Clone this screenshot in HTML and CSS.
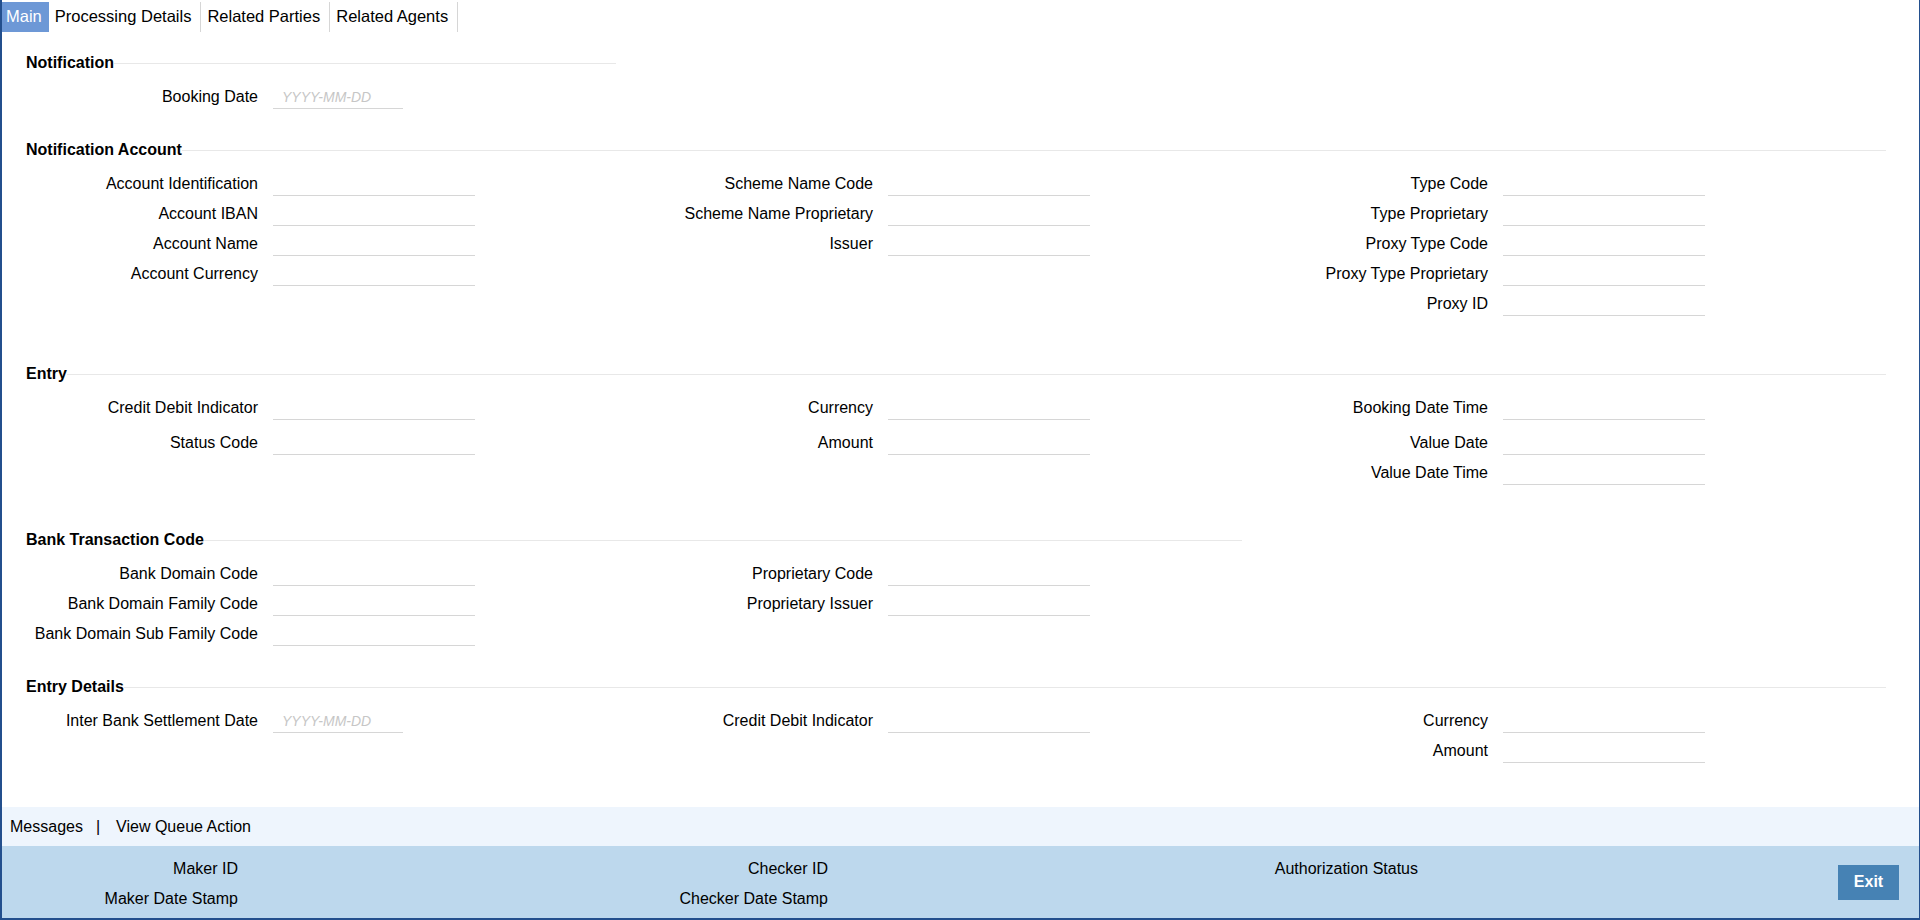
FILE: index.html
```html
<!DOCTYPE html>
<html lang="en">
<head>
    <meta charset="UTF-8">
    <title>Notification Detail</title>
    <link rel="stylesheet" href="styles.css">
</head>
<body>
<div class="frame">
    <ul class="tabs">
        <li class="tab tab-on">Main</li>
        <li class="tab">Processing Details</li>
        <li class="tab">Related Parties</li>
        <li class="tab">Related Agents</li>
    </ul>

    <div class="form">
        <!-- Notification -->
        <div class="sec sec-notif">
            <div class="legend w-one"><span>Notification</span></div>
            <div class="cols">
                <div class="col">
                    <div class="row"><label>Booking Date</label><input class="date" type="text" placeholder="YYYY-MM-DD"></div>
                </div>
            </div>
        </div>

        <!-- Notification Account -->
        <div class="sec sec-acct">
            <div class="legend w-full"><span>Notification Account</span></div>
            <div class="cols">
                <div class="col">
                    <div class="row"><label>Account Identification</label><input type="text"></div>
                    <div class="row"><label>Account IBAN</label><input type="text"></div>
                    <div class="row"><label>Account Name</label><input type="text"></div>
                    <div class="row"><label>Account Currency</label><input type="text"></div>
                </div>
                <div class="col">
                    <div class="row"><label>Scheme Name Code</label><input type="text"></div>
                    <div class="row"><label>Scheme Name Proprietary</label><input type="text"></div>
                    <div class="row"><label>Issuer</label><input type="text"></div>
                </div>
                <div class="col">
                    <div class="row"><label>Type Code</label><input type="text"></div>
                    <div class="row"><label>Type Proprietary</label><input type="text"></div>
                    <div class="row"><label>Proxy Type Code</label><input type="text"></div>
                    <div class="row"><label>Proxy Type Proprietary</label><input type="text"></div>
                    <div class="row"><label>Proxy ID</label><input type="text"></div>
                </div>
            </div>
        </div>

        <!-- Entry -->
        <div class="sec sec-entry">
            <div class="legend w-full"><span>Entry</span></div>
            <div class="cols">
                <div class="col">
                    <div class="row row-tall"><label>Credit Debit Indicator</label><input type="text"></div>
                    <div class="row"><label>Status Code</label><input type="text"></div>
                </div>
                <div class="col">
                    <div class="row row-tall"><label>Currency</label><input type="text"></div>
                    <div class="row"><label>Amount</label><input type="text"></div>
                </div>
                <div class="col">
                    <div class="row row-tall"><label>Booking Date Time</label><input type="text"></div>
                    <div class="row"><label>Value Date</label><input type="text"></div>
                    <div class="row"><label>Value Date Time</label><input type="text"></div>
                </div>
            </div>
        </div>

        <!-- Bank Transaction Code -->
        <div class="sec sec-bank">
            <div class="legend w-two"><span>Bank Transaction Code</span></div>
            <div class="cols">
                <div class="col">
                    <div class="row"><label>Bank Domain Code</label><input type="text"></div>
                    <div class="row"><label>Bank Domain Family Code</label><input type="text"></div>
                    <div class="row"><label>Bank Domain Sub Family Code</label><input type="text"></div>
                </div>
                <div class="col">
                    <div class="row"><label>Proprietary Code</label><input type="text"></div>
                    <div class="row"><label>Proprietary Issuer</label><input type="text"></div>
                </div>
            </div>
        </div>

        <!-- Entry Details -->
        <div class="sec">
            <div class="legend w-full"><span>Entry Details</span></div>
            <div class="cols">
                <div class="col">
                    <div class="row"><label>Inter Bank Settlement Date</label><input class="date" type="text" placeholder="YYYY-MM-DD"></div>
                </div>
                <div class="col">
                    <div class="row"><label>Credit Debit Indicator</label><input type="text"></div>
                </div>
                <div class="col">
                    <div class="row"><label>Currency</label><input type="text"></div>
                    <div class="row"><label>Amount</label><input type="text"></div>
                </div>
            </div>
        </div>
    </div>

    <div class="msgbar">
        <a href="javascript:void(0)">Messages</a><span class="sep">|</span><a href="javascript:void(0)">View Queue Action</a>
    </div>

    <div class="audit">
        <div class="audit-cols">
            <div class="audit-col">
                <div class="audit-row">Maker ID</div>
                <div class="audit-row">Maker Date Stamp</div>
            </div>
            <div class="audit-col">
                <div class="audit-row">Checker ID</div>
                <div class="audit-row">Checker Date Stamp</div>
            </div>
            <div class="audit-col">
                <div class="audit-row">Authorization Status</div>
            </div>
        </div>
        <button class="exit" type="button">Exit</button>
    </div>
</div>
</body>
</html>
```

FILE: styles.css
```css
*{
    padding: 0px;
    margin: 0px;
    box-sizing: border-box;
}
body{
    font-family: "Liberation Sans", Arial, sans-serif;
    font-size: 16px;
    color: #000;
    background: white;
}
.frame{
    width: 1920px;
    height: 920px;
    display: flex;
    flex-direction: column;
    border-left: 2px solid #234f8d;
    border-right: 1px solid #234f8d;
    border-bottom: 2px solid #234f8d;
    overflow: hidden;
}

/* tabs */
.tabs{
    list-style: none;
    display: flex;
    height: 32px;
    padding-top: 2px;
}
.tab{
    line-height: 29px;
    padding: 0 9px 1px 6px;
    font-size: 16.5px;
    border-right: 1px solid #d6d6d6;
    white-space: nowrap;
}
.tab-on{
    background: #6d98d6;
    color: white;
    padding: 0 7px 1px 4px;
    border-right: none;
}

/* form */
.form{
    flex: 1;
    padding: 21px 0 0 10px;
}
.sec{
    margin-bottom: 28px;
}
.sec-acct{
    margin-bottom: 45px;
}
.sec-entry{
    margin-bottom: 42px;
}
.sec-bank{
    margin-bottom: 28px;
}
.legend{
    display: flex;
    align-items: center;
    height: 20px;
    padding-left: 14px;
    margin-bottom: 9px;
    font-weight: bold;
}
.legend::after{
    content: "";
    flex: 1;
    height: 1px;
    background: #e8e8e8;
}
.w-one{
    width: 604px;
}
.w-two{
    width: 1230px;
}
.w-full{
    width: 1874px;
}
.cols{
    display: grid;
    grid-template-columns: repeat(3, 615px);
}
.row{
    display: flex;
    align-items: center;
    height: 30px;
}
.row-tall{
    margin-bottom: 5px;
}
.row label{
    width: 246px;
    margin-right: 15px;
    text-align: right;
    white-space: nowrap;
}
.row input{
    width: 202px;
    height: 24px;
    border: none;
    border-bottom: 1px solid #d6d6d6;
    background: transparent;
    font-family: "Liberation Sans", Arial, sans-serif;
    font-size: 14px;
    padding: 0 9px;
    outline: none;
}
.row input.date{
    width: 130px;
}
.row input::placeholder{
    color: #c6c6c6;
    font-style: italic;
}

/* footer */
.msgbar{
    height: 39px;
    line-height: 39px;
    padding-left: 8px;
    background: #eef5fd;
}
.msgbar a{
    color: #000;
    text-decoration: none;
}
.sep{
    margin: 0 16px 0 13px;
}
.audit{
    height: 72px;
    display: flex;
    align-items: center;
    background: #bdd8ed;
}
.audit-cols{
    align-self: flex-start;
    display: grid;
    grid-template-columns: repeat(3, 590px);
    padding: 8px 0 0 10px;
}
.audit-row{
    width: 226px;
    line-height: 30px;
    text-align: right;
    white-space: nowrap;
}
.exit{
    margin-left: auto;
    margin-right: 20px;
    width: 61px;
    height: 35px;
    border: none;
    background: #4682b4;
    color: white;
    font-family: "Liberation Sans", Arial, sans-serif;
    font-size: 16px;
    font-weight: bold;
}
```
